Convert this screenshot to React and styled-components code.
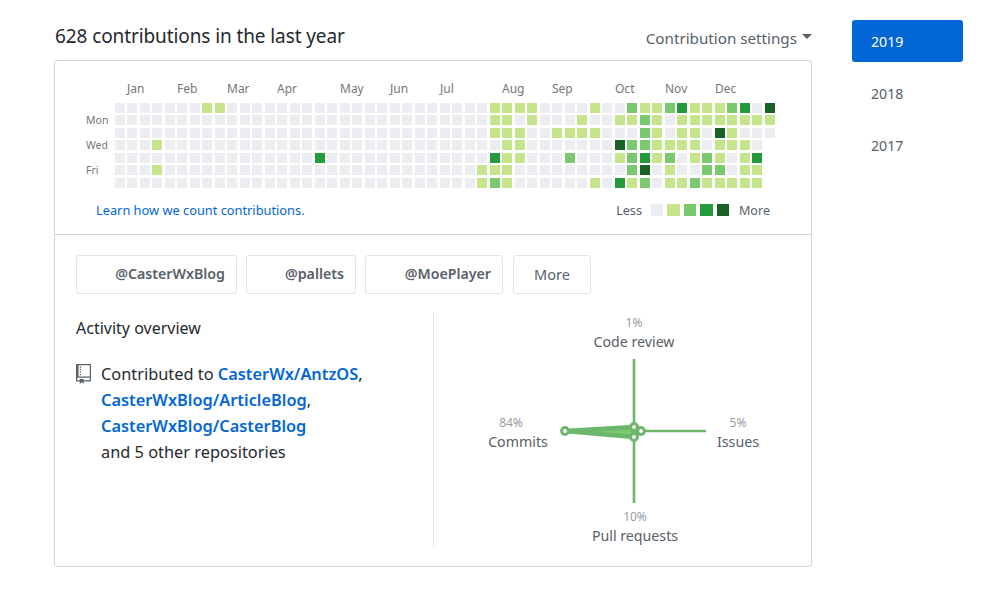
import React from "react";
import styled, { createGlobalStyle } from "styled-components";

const Global = createGlobalStyle`
  html, body { margin: 0; padding: 0; background: #fff; }
  body { font-family: "Noto Sans", "Open Sans", "Liberation Sans", sans-serif; color: #24292e; }
`;

const Page = styled.div`
  width: 981px;
  height: 589px;
  box-sizing: border-box;
  padding: 20px 18px 0 54px;
  display: flex;
  align-items: flex-start;
  overflow: hidden;
`;
const Main = styled.main`
  width: 758px;
  flex: none;
`;
const Heading = styled.div`
  height: 40px;
  display: flex;
  justify-content: space-between;
  align-items: center;
  margin-top: -4px;
`;
const Title = styled.h2`
  margin: 0 0 0 1px;
  font-size: 19px;
  font-weight: 400;
  letter-spacing: -0.1px;
  white-space: nowrap;
`;
const Settings = styled.div`
  display: flex;
  align-items: center;
  gap: 5px;
  font-size: 15.2px;
  color: #586069;
  margin-top: 3px;
  white-space: nowrap;
`;
const Caret = styled.span`
  width: 0;
  height: 0;
  border-left: 5px solid transparent;
  border-right: 5px solid transparent;
  border-top: 5px solid #586069;
  margin-top: -2px;
`;
const Card = styled.section`
  box-sizing: border-box;
  height: 507px;
  margin-top: 4px;
  border: 1px solid #d1d5da;
  border-radius: 3px;
`;
const GraphArea = styled.div`
  height: 173px;
  border-bottom: 1px solid #d1d5da;
  position: relative;
`;
const Graph = styled.svg`
  display: block;
  width: 756px;
  height: 130px;
`;
const Cell = styled.rect`
  shape-rendering: crispEdges;
`;
const MonthText = styled.text`
  font-size: 12px;
  fill: #767676;
`;
const DayText = styled.text`
  font-size: 10.5px;
  fill: #767676;
`;
const GraphFooter = styled.div`
  display: flex;
  justify-content: space-between;
  align-items: center;
  padding: 10px 41px 0 41px;
  font-size: 12.5px;
`;
const Learn = styled.a`
  color: #0366d6;
  font-size: 12.8px;
`;
const Legend = styled.div`
  display: flex;
  align-items: center;
  color: #586069;
  font-size: 12.6px;
`;
const Swatches = styled.div`
  display: flex;
  gap: 4px;
  margin: 0 10px 0 9px;
`;
const Swatch = styled.span`
  width: 12.4px;
  height: 12px;
  background: ${p => p.$c};
`;
const Lower = styled.div`
  padding: 20px 21px 0;
`;
const OrgRow = styled.div`
  display: flex;
  gap: 9px;
`;
const OrgButton = styled.div`
  box-sizing: border-box;
  height: 39px;
  width: ${p => p.$w}px;
  border: 1px solid #e1e4e8;
  border-radius: 3px;
  display: flex;
  align-items: center;
  justify-content: flex-end;
  padding: 0 11px 2px 0;
  font-size: 14.2px;
  font-weight: 600;
  color: #586069;
  white-space: nowrap;
`;
const MoreButton = styled(OrgButton)`
  font-weight: 400;
  justify-content: center;
  padding: 0 0 2px;
  margin-left: 1px;
  font-size: 14.5px;
`;
const Columns = styled.div`
  display: flex;
  margin-top: 19px;
`;
const Overview = styled.div`
  width: 357px;
  height: 233px;
  flex: none;
  border-right: 1px solid #e1e4e8;
`;
const OverviewTitle = styled.h3`
  margin: 3px 0 0;
  font-size: 16px;
  font-weight: 400;
  line-height: 24px;
`;
const Contrib = styled.div`
  display: flex;
  margin-top: 21px;
`;
const BookIcon = styled.svg`
  width: 15px;
  height: 20px;
  flex: none;
  margin: 3px 10px 0 0;
  fill: #586069;
`;
const ContribText = styled.div`
  font-size: 16.35px;
  line-height: 26px;
  white-space: nowrap;
`;
const RepoLink = styled.a`
  color: #0366d6;
  font-weight: 600;
`;
const RadarSvg = styled.svg`
  display: block;
  width: 356px;
  height: 240px;
`;
const RadarPct = styled.text`
  font-size: 12px;
  fill: #959da5;
  text-anchor: middle;
`;
const RadarLabel = styled.text`
  font-size: 14.2px;
  fill: #586069;
  text-anchor: middle;
`;
const Years = styled.nav`
  margin-left: 40px;
  width: 111px;
  flex: none;
  display: flex;
  flex-direction: column;
  gap: 10px;
`;
const Year = styled.div`
  box-sizing: border-box;
  height: 42px;
  padding: 0 0 0 19px;
  display: flex;
  align-items: center;
  font-size: 14.2px;
  border-radius: 3px;
  background: ${p => (p.$active ? "#0366d6" : "transparent")};
  color: ${p => (p.$active ? "#fff" : "#586069")};
`;

const COLORS = ["#ebedf0", "#c6e48b", "#7bc96f", "#239a3b", "#196127"];
const tail = [
  "0" + "1111" + "0000" + "10" + "0211231112304",
  "0" + "1101" + "0001" + "00" + "1121011111111",
  "0" + "1110" + "0111" + "10" + "0021011041000",
  "0" + "0110" + "0000" + "00" + "422111101110",
  "0" + "3110" + "0020" + "00" + "123120121013",
  "1" + "1100" + "0000" + "00" + "024010022011",
  "1" + "2100" + "0000" + "10" + "312011211111",
];
const early = { "0-7": 1, "0-8": 1, "3-3": 1, "5-3": 1, "4-16": 3 };
const cells = [];
tail.forEach((t, r) => {
  for (let c = 0; c < 29 + t.length; c++) {
    const v = c >= 29 ? Number(t[c - 29]) : early[`${r}-${c}`] || 0;
    cells.push({ x: 60 + Math.floor(c * 12.5), y: 42 + Math.floor(r * 12.5), v, k: `${r}-${c}` });
  }
});
const months = [
  ["Jan", 72], ["Feb", 122], ["Mar", 172], ["Apr", 222], ["May", 285], ["Jun", 335],
  ["Jul", 385], ["Aug", 447], ["Sep", 497], ["Oct", 560], ["Nov", 610], ["Dec", 660],
];
const days = [["Mon", 63], ["Wed", 88], ["Fri", 113]];
const orgs = [["@CasterWxBlog", 161], ["@pallets", 110], ["@MoePlayer", 138]];

export default function App() {
  return (
    <Page>
      <Global />
      <Main>
        <Heading>
          <Title>628 contributions in the last year</Title>
          <Settings>Contribution settings<Caret /></Settings>
        </Heading>
        <Card>
          <GraphArea>
            <Graph viewBox="0 0 756 130">
              {months.map(([m, x]) => <MonthText key={m} x={x} y={32}>{m}</MonthText>)}
              {days.map(([d, y]) => <DayText key={d} x={31} y={y}>{d}</DayText>)}
              {cells.map(c => <Cell key={c.k} x={c.x} y={c.y} width={10} height={10} fill={COLORS[c.v]} />)}
            </Graph>
            <GraphFooter>
              <Learn>Learn how we count contributions.</Learn>
              <Legend>
                Less
                <Swatches>{COLORS.map(c => <Swatch key={c} $c={c} />)}</Swatches>
                More
              </Legend>
            </GraphFooter>
          </GraphArea>
          <Lower>
            <OrgRow>
              {orgs.map(([o, w]) => <OrgButton key={o} $w={w}>{o}</OrgButton>)}
              <MoreButton $w={78}>More</MoreButton>
            </OrgRow>
            <Columns>
              <Overview>
                <OverviewTitle>Activity overview</OverviewTitle>
                <Contrib>
                  <BookIcon viewBox="0 0 12 16">
                    <path fillRule="evenodd" d="M4 9H3V8h1v1zm0-3H3v1h1V6zm0-2H3v1h1V4zm0-2H3v1h1V2zm8-1v12c0 .55-.45 1-1 1H6v2l-1.5-1.5L3 16v-2H1c-.55 0-1-.45-1-1V1c0-.55.45-1 1-1h10c.55 0 1 .45 1 1zm-1 10H1v2h2v-1h3v1h5v-2zm0-10H2v9h9V1z" />
                  </BookIcon>
                  <ContribText>
                    Contributed to <RepoLink>CasterWx/AntzOS</RepoLink>,<br />
                    <RepoLink>CasterWxBlog/ArticleBlog</RepoLink>,<br />
                    <RepoLink>CasterWxBlog/CasterBlog</RepoLink><br />
                    and 5 other repositories
                  </ContribText>
                </Contrib>
              </Overview>
              <RadarSvg viewBox="0 0 356 240">
                <RadarPct x={200} y={14}>1%</RadarPct>
                <RadarLabel x={200} y={34}>Code review</RadarLabel>
                <RadarPct x={77} y={114}>84%</RadarPct>
                <RadarLabel x={84} y={134}>Commits</RadarLabel>
                <RadarPct x={304} y={114}>5%</RadarPct>
                <RadarLabel x={304} y={134}>Issues</RadarLabel>
                <RadarPct x={201} y={208}>10%</RadarPct>
                <RadarLabel x={201} y={228}>Pull requests</RadarLabel>
                <g stroke="#6db66c" strokeWidth="2.6" fill="none">
                  <path d="M200 46V190M131 118H272" />
                  <path d="M131 118L200 114L207 118L200 124Z" fill="#7bc96f" strokeLinejoin="round" strokeWidth="4.5" />
                  <g fill="#fff" strokeWidth="3">
                    <circle cx="131" cy="118" r="3.4" />
                    <circle cx="200" cy="114" r="3.4" />
                    <circle cx="207" cy="118" r="3.4" />
                    <circle cx="200" cy="124" r="3.4" />
                  </g>
                </g>
              </RadarSvg>
            </Columns>
          </Lower>
        </Card>
      </Main>
      <Years>
        <Year $active>2019</Year>
        <Year>2018</Year>
        <Year>2017</Year>
      </Years>
    </Page>
  );
}
